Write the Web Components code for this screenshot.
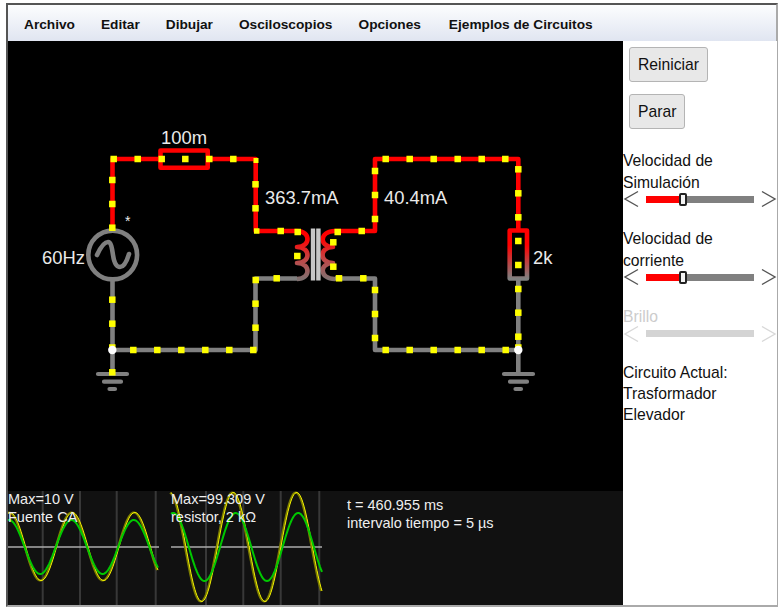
<!DOCTYPE html>
<html>
<head>
<meta charset="utf-8">
<style>
  html, body { margin: 0; padding: 0; background: #fff; }
  body { font-family: "Liberation Sans", Arial, sans-serif; }
</style>
</head>
<body>
<sim-app>
  <sim-menu slot="menu">
    <span>Archivo</span><span>Editar</span><span>Dibujar</span><span>Osciloscopios</span><span>Opciones</span><span>Ejemplos de Circuitos</span>
  </sim-menu>
  <circuit-canvas slot="canvas"></circuit-canvas>
  <sim-panel slot="panel">
    <sim-button>Reiniciar</sim-button>
    <sim-button>Parar</sim-button>
    <sim-slider label="Velocidad de Simulación" value="31"></sim-slider>
    <sim-slider label="Velocidad de corriente" value="31"></sim-slider>
    <sim-slider label="Brillo" value="0" disabled></sim-slider>
    <div style="font-size:15.7px;line-height:21px;margin-top:8px;color:#111">Circuito Actual:<br>Trasformador<br>Elevador</div>
  </sim-panel>
</sim-app>
<script>
  const appTemplate = document.createElement("template");
  appTemplate.innerHTML = `
<style>
  :host {
    display: block;
    box-sizing: border-box;
    width: 772px;
    height: 604px;
    margin: 3px 0 0 6px;
    border: 2px solid #aaa;
    border-top-color: #555;
    border-left-color: #555;
    background: #fff;
  }
  .body { display: flex; height: 564px; }
  ::slotted([slot="canvas"]) { flex: none; }
  ::slotted([slot="panel"]) { flex: 1; }
</style>
<slot name="menu"></slot>
<div class="body">
  <slot name="canvas"></slot>
  <slot name="panel"></slot>
</div>`;
  class SimApp extends HTMLElement {
    constructor() {
      super();
      this.attachShadow({ mode: "open" }).appendChild(appTemplate.content.cloneNode(true));
    }
  }
  customElements.define("sim-app", SimApp);

  const menuTemplate = document.createElement("template");
  menuTemplate.innerHTML = `
<style>
  :host {
    display: flex;
    box-sizing: border-box;
    height: 36px;
    align-items: center;
    gap: 26px;
    padding: 2px 16px 0;
    background: linear-gradient(#fcfdfe, #e0e5f1);
    font: bold 13.7px "Liberation Sans", Arial, sans-serif;
    color: #111;
  }
  ::slotted(:last-child) { margin-left: 2px; }
</style>
<slot></slot>`;
  class SimMenu extends HTMLElement {
    constructor() {
      super();
      this.attachShadow({ mode: "open" }).appendChild(menuTemplate.content.cloneNode(true));
    }
  }
  customElements.define("sim-menu", SimMenu);

  const buttonTemplate = document.createElement("template");
  buttonTemplate.innerHTML = `
<style>
  :host { display: block; margin: 0 0 12px 6px; }
  button {
    display: block;
    height: 35px;
    padding: 0 8px;
    border: 1px solid #b4b4b4;
    border-radius: 3px;
    background: #e8e8e8;
    color: #111;
    font: 15.7px "Liberation Sans", Arial, sans-serif;
  }
</style>
<button><slot></slot></button>`;
  class SimButton extends HTMLElement {
    constructor() {
      super();
      this.attachShadow({ mode: "open" }).appendChild(buttonTemplate.content.cloneNode(true));
    }
  }
  customElements.define("sim-button", SimButton);

  const sliderTemplate = document.createElement("template");
  sliderTemplate.innerHTML = `
<style>
  :host {
    display: block;
    width: 154px;
    margin: 9px 0 9px;
    color: #111;
    --arrow: #555;
    --fill: #f00;
    --rest: #808080;
  }
  :host([disabled]) { color: #ccc; --arrow: #d8d8d8; --fill: #d4d4d4; --rest: #d4d4d4; }
  .label { font-size: 15.7px; line-height: 21.5px; width: 125px; }
  .row { display: flex; align-items: center; height: 22px; margin-top: -5px; }
  svg { flex: none; display: block; }
  .track { position: relative; flex: 1; height: 7px; margin: 0 7px; background: var(--rest); }
  .fill { height: 100%; background: var(--fill); }
  .thumb {
    position: absolute; top: -3px; width: 4px; height: 9px;
    border: 2px solid #222; border-radius: 2px; background: #f4f4f4;
  }
</style>
<div class="label"></div>
<div class="row">
  <svg width="16" height="18" viewBox="0 0 16 18"><path d="M15 1.5 2 9 15 16.5" fill="none" stroke="var(--arrow)" stroke-width="1.4"/></svg>
  <div class="track"><div class="fill"></div><div class="thumb"></div></div>
  <svg width="16" height="18" viewBox="0 0 16 18"><path d="M1 1.5 14 9 1 16.5" fill="none" stroke="var(--arrow)" stroke-width="1.4"/></svg>
</div>`;
  class SimSlider extends HTMLElement {
    constructor() {
      super();
      this.attachShadow({ mode: "open" }).appendChild(sliderTemplate.content.cloneNode(true));
    }
    connectedCallback() {
      const value = this.getAttribute("value") ?? "0";
      this.shadowRoot.querySelector(".label").textContent = this.getAttribute("label") ?? "";
      this.shadowRoot.querySelector(".fill").style.width = `${value}%`;
      const thumb = this.shadowRoot.querySelector(".thumb");
      thumb.style.left = `${value}%`;
      if (this.hasAttribute("disabled")) thumb.style.display = "none";
    }
  }
  customElements.define("sim-slider", SimSlider);

  const panelTemplate = document.createElement("template");
  panelTemplate.innerHTML = `
<style>
  :host {
    display: flex;
    flex-direction: column;
    align-items: flex-start;
    box-sizing: border-box;
    padding-top: 6px;
    font-family: "Liberation Sans", Arial, sans-serif;
    background: #fff;
  }
</style>
<slot></slot>`;
  class SimPanel extends HTMLElement {
    constructor() {
      super();
      this.attachShadow({ mode: "open" }).appendChild(panelTemplate.content.cloneNode(true));
    }
  }
  customElements.define("sim-panel", SimPanel);

  // coordinates below are page pixels, the viewBox moves them back by the canvas origin
  const RED = "#f00", GRAY = "#808080";
  const wires = [
    ["M112.5 231V159H160", RED],
    ["M208 159H255.7V231H297", RED],
    ["M335 231H375V159H518.3V230", RED],
    ["M297 278.5H255.5V350H112.5", GRAY],
    ["M335 278.5H375V350H518.3", GRAY],
    ["M112.5 280V350", GRAY],
    ["M518.3 279V374", GRAY],
    ["M112.5 350V374", GRAY]
  ];
  const dots = [
    [113.7,159],[137.7,159],[161.7,159],[185.3,159],[209.3,159],[233.3,159],[256,160.5,5],
    [112.3,180],[112.3,204],[112.3,227.7],
    [255.5,184.3],[255.5,208.3],[256.7,231,5.5],[280.7,231],[297.7,232],[297.3,256],
    [337.7,232],[361.7,231],[333.3,242.3],[333.3,266.7],
    [375,219],[375,195],[375,171],[385.7,159],
    [409.7,159],[433.7,159],[457.7,159],[481.7,159],[505.3,159],
    [518.3,169.3],[518.3,193.3],[518.3,217.3],[518.3,241],[518.3,265],[518.3,289],[518.3,312.7],[518.3,336.7],
    [505.7,350],[481.7,350],[457.7,350],[433.7,350],[409.7,350],[385.7,350],
    [375,290],[375,314],[375,338],[363.3,278.3],[339,278.3],
    [276.7,278.3],[255.7,280],[255.5,303.7],[255.5,327.7],
    [253.3,350],[229.3,350],[205.3,350],[181.3,350],[157.3,350],[133.3,350],
    [112.3,299.7],[112.3,323.7],[112.3,347.5],[112.3,372.3],[518.3,347.5]
  ];
  function scopeTrace(x0, x1, mid, amp, period, peak) {
    let d = "";
    for (let x = x0; x <= x1; x++) {
      const y = mid - amp * Math.cos((x - peak) / period * 2 * Math.PI);
      d += `${d ? "L" : "M"}${x} ${y.toFixed(1)}`;
    }
    return d;
  }
  const canvasTemplate = document.createElement("template");
  canvasTemplate.innerHTML = `
<style>
  :host { display: block; width: 615px; height: 564px; background: #000; }
  svg { display: block; }
  text { font-family: "Liberation Sans", Arial, sans-serif; fill: #fff; }
  .big { font-size: 18.4px; fill: #eaeaea; }
  .scope { font-size: 14.5px; fill: #eee; }
</style>
<svg width="615" height="564" viewBox="8 41 615 564">
  <defs>
    <linearGradient id="r2" x1="0" y1="0" x2="0" y2="1"><stop offset="0" stop-color="${RED}"/><stop offset=".3" stop-color="${RED}"/><stop offset="1" stop-color="${GRAY}"/></linearGradient>
    <linearGradient id="c1" x1="0" y1="0" x2="0" y2="1"><stop offset=".15" stop-color="#f00"/><stop offset=".6" stop-color="#c04848"/><stop offset="1" stop-color="#807070"/></linearGradient>
  </defs>
  <rect x="8" y="491" width="615" height="114" fill="#111"/>
  <g fill="none" stroke-linejoin="round" stroke-width="4.6">
    ${wires.map(([d, c]) => `<path d="${d}" stroke="${c}"/>`).join("")}
    <rect x="160.5" y="150.5" width="47.2" height="17.2" stroke="${RED}"/>
    <rect x="509.7" y="230.5" width="17.3" height="48" stroke="url(#r2)"/>
    <path d="M297 231C311 231 311 247 297 247C311 247 311 263 297 263C311 263 311 279 297 279" stroke="url(#c1)"/>
    <path d="M335 231C319 231 319 247 333 247C319 247 319 263 333 263C319 263 319 279 335 279" stroke="url(#c1)"/>
    <path d="M313 228.5V280.5M318.4 228.5V280.5" stroke="#c8c8c8" stroke-width="4.4"/>
    <circle cx="112.7" cy="255" r="24.4" stroke="${GRAY}"/>
    <path d="M97 255Q103 242 108 242C111 242 112 248 113 255C114 262 116 267 120 267Q125 267 129 254" stroke="${GRAY}" stroke-linecap="round"/>
    <path d="M98 374H127M104 381.7H121M109.5 389H115M504 374H533M510 381.7H527M515.5 389H521" stroke="${GRAY}" stroke-linecap="round" stroke-width="4.2"/>
  </g>
  ${dots.map(([x, y, s = 6.5]) => `<rect x="${x - s / 2}" y="${y - s / 2}" width="${s}" height="${s}" fill="#ff0"/>`).join("")}
  <circle cx="112.3" cy="350" r="4.2" fill="#fff"/><circle cx="518.3" cy="350" r="4.2" fill="#fff"/>
  <text class="big" x="161" y="144">100m</text>
  <text class="big" x="265" y="203.5">363.7mA</text>
  <text class="big" x="384" y="203.5">40.4mA</text>
  <text class="big" x="42" y="263.5">60Hz</text>
  <text class="big" x="533" y="263.5">2k</text>
  <text x="125" y="226" font-size="14" style="fill:#eee">*</text>
  <path d="M42.7 491V605M80 491V605M116.7 491V605M155.7 491V605M206 491V605M243.3 491V605M280.7 491V605M319.3 491V605" stroke="#383838" stroke-width="2"/>
  <path d="M8 547H159M171 547H322" stroke="#aaa" stroke-width="1.5"/>
  <g fill="none">
    <path d="${scopeTrace(8, 158, 546.5, 34, 62.4, 10)}" stroke="#7c7c00" stroke-width="2" transform="translate(-1 0)"/>
    <path d="${scopeTrace(8, 158, 546.5, 34, 62.4, 10)}" stroke="#f0f000" stroke-width="1"/>
    <path d="${scopeTrace(8, 158, 547, 27, 62.4, 9)}" stroke="#00c800" stroke-width="2"/>
    <path d="${scopeTrace(171, 322, 547, 54.5, 63.3, 233.4)}" stroke="#7c7c00" stroke-width="2" transform="translate(-1 0)"/>
    <path d="${scopeTrace(171, 322, 547, 54.5, 63.3, 233.4)}" stroke="#f0f000" stroke-width="1"/>
    <path d="${scopeTrace(171, 322, 547, 34, 62.5, 235.7)}" stroke="#00c800" stroke-width="2"/>
  </g>
  <text class="scope" x="8" y="504">Max=10 V</text>
  <text class="scope" x="8" y="522">Fuente CA</text>
  <text class="scope" x="171" y="504">Max=99.309 V</text>
  <text class="scope" x="171" y="522">resistor, 2 kΩ</text>
  <text class="scope" x="347" y="510">t = 460.955 ms</text>
  <text class="scope" x="347" y="528">intervalo tiempo = 5 µs</text>
</svg>`;
  class CircuitCanvas extends HTMLElement {
    constructor() {
      super();
      this.attachShadow({ mode: "open" }).appendChild(canvasTemplate.content.cloneNode(true));
    }
  }
  customElements.define("circuit-canvas", CircuitCanvas);
</script>
</body>
</html>
